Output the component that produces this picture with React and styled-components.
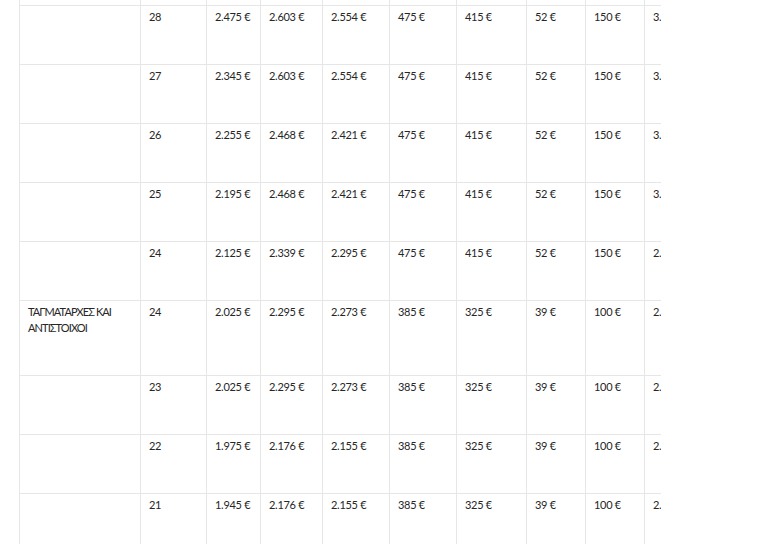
import React from "react";
import styled, { createGlobalStyle } from "styled-components";

const GlobalStyle = createGlobalStyle`
  html, body {
    margin: 0;
    padding: 0;
    background: #fff;
  }
  body {
    font-family: Lato, "Liberation Sans", sans-serif;
    color: #333;
  }
`;

const colWidths = [121, 66, 54, 62, 67, 67, 70, 59, 59, 80, 80];

const rows = [
  { rank: "", grade: "28", vals: ["2.475 €", "2.603 €", "2.554 €", "475 €", "415 €", "52 €", "150 €", "3.564 €", "3.041 €"] },
  { rank: "", grade: "27", vals: ["2.345 €", "2.603 €", "2.554 €", "475 €", "415 €", "52 €", "150 €", "3.434 €", "2.935 €"] },
  { rank: "", grade: "26", vals: ["2.255 €", "2.468 €", "2.421 €", "475 €", "415 €", "52 €", "150 €", "3.208 €", "2.751 €"] },
  { rank: "", grade: "25", vals: ["2.195 €", "2.468 €", "2.421 €", "475 €", "415 €", "52 €", "150 €", "3.148 €", "2.702 €"] },
  { rank: "", grade: "24", vals: ["2.125 €", "2.339 €", "2.295 €", "475 €", "415 €", "52 €", "150 €", "2.954 €", "2.545 €"] },
  { rank: "ΤΑΓΜΑΤΑΡΧΕΣ ΚΑΙ ΑΝΤΙΣΤΟΙΧΟΙ", grade: "24", vals: ["2.025 €", "2.295 €", "2.273 €", "385 €", "325 €", "39 €", "100 €", "2.806 €", "2.425 €"] },
  { rank: "", grade: "23", vals: ["2.025 €", "2.295 €", "2.273 €", "385 €", "325 €", "39 €", "100 €", "2.806 €", "2.425 €"] },
  { rank: "", grade: "22", vals: ["1.975 €", "2.176 €", "2.155 €", "385 €", "325 €", "39 €", "100 €", "2.675 €", "2.318 €"] },
  { rank: "", grade: "21", vals: ["1.945 €", "2.176 €", "2.155 €", "385 €", "325 €", "39 €", "100 €", "2.645 €", "2.294 €"] },
];

const Page = styled.div`
  height: 544px;
  overflow: hidden;
  padding-left: 19px;
`;

const Scroller = styled.div`
  width: 642px;
  overflow: hidden;
`;

const Table = styled.table`
  border-collapse: collapse;
  table-layout: fixed;
  width: ${colWidths.reduce((a, b) => a + b, 0)}px;
  font-size: 11px;
  line-height: 16px;
  letter-spacing: -0.3px;
`;

/* bottom edge of the row above, scrolled mostly out of view */
const StubCell = styled.td`
  border: 1px solid #e6e6e6;
  border-top: none;
  padding: 0;
  height: 5px;
`;

const Cell = styled.td`
  border: 1px solid #e6e6e6;
  padding: 3px 8px 39px;
  vertical-align: top;
  text-align: left;
  color: #262626;
  white-space: ${(p) => (p.$wrap ? "normal" : "nowrap")};
  letter-spacing: ${(p) => (p.$wrap ? "-0.9px" : "-0.3px")};
  overflow: hidden;
`;

export default function App() {
  return (
    <Page>
      <GlobalStyle />
      <Scroller>
        <Table>
          <colgroup>
            {colWidths.map((w, i) => (
              <col key={i} style={{ width: w }} />
            ))}
          </colgroup>
          <tbody>
            <tr>
              {colWidths.map((_, i) => (
                <StubCell key={i} />
              ))}
            </tr>
            {rows.map((r, i) => (
              <tr key={i}>
                <Cell $wrap>{r.rank}</Cell>
                <Cell>{r.grade}</Cell>
                {r.vals.map((v, j) => (
                  <Cell key={j}>{v}</Cell>
                ))}
              </tr>
            ))}
          </tbody>
        </Table>
      </Scroller>
    </Page>
  );
}
